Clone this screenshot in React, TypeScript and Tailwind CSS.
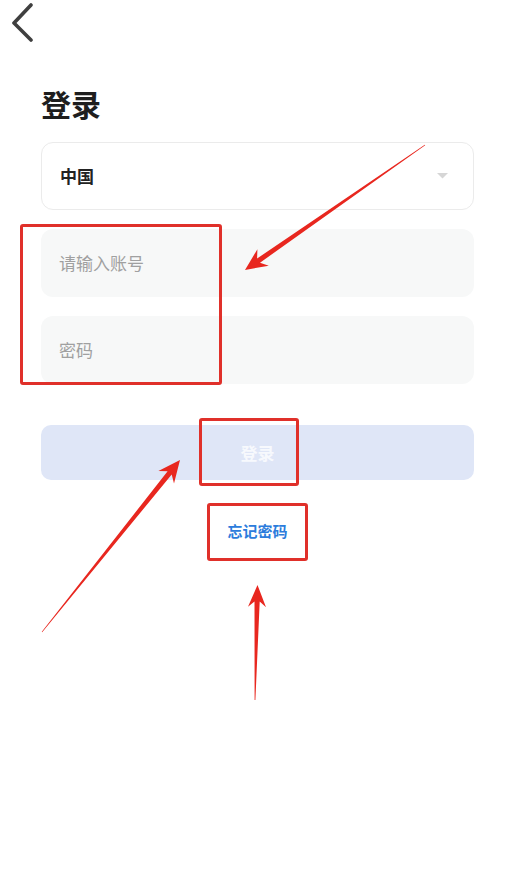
import React from "react";

type Pt = [number, number];

function arrowPoints(tail: Pt, tip: Pt, headLen: number, headHalf: number, shaftW: number, tailW: number): string {
  const dx = tip[0] - tail[0];
  const dy = tip[1] - tail[1];
  const len = Math.hypot(dx, dy);
  const ux = dx / len;
  const uy = dy / len;
  const px = -uy;
  const py = ux;
  const bx = tip[0] - ux * headLen;
  const by = tip[1] - uy * headLen;
  const nx = tip[0] - ux * headLen * 0.75;
  const ny = tip[1] - uy * headLen * 0.75;
  const pts: Pt[] = [
    [tail[0] + px * tailW, tail[1] + py * tailW],
    [nx + px * shaftW, ny + py * shaftW],
    [bx + px * headHalf, by + py * headHalf],
    [tip[0], tip[1]],
    [bx - px * headHalf, by - py * headHalf],
    [nx - px * shaftW, ny - py * shaftW],
    [tail[0] - px * tailW, tail[1] - py * tailW],
  ];
  return pts.map((p) => `${p[0].toFixed(1)},${p[1].toFixed(1)}`).join(" ");
}

export default function App() {
  const font = { fontFamily: '"Noto Sans CJK SC", "Noto Sans", sans-serif' };
  return (
    <div className="relative w-[515px] h-[894px] bg-white overflow-hidden" style={font}>
      <div className="h-[44px] pl-[10px] pt-[2px]">
        <svg width="26" height="40" viewBox="0 0 26 40">
          <polyline points="21,3 4,21 21,38" fill="none" stroke="#3f3f3f" strokeWidth="3.6" strokeLinecap="round" strokeLinejoin="round" />
        </svg>
      </div>
      <div className="px-[41px]">
        <h1 className="mt-[41px] text-[30px] leading-[36px] font-bold text-[#1e1e1e]">登录</h1>
        <div className="mt-[21px] h-[68px] rounded-[12px] border border-[#ebebeb] flex items-center justify-between pl-[18px] pr-[25px]">
          <span className="text-[17px] font-semibold text-[#222]">中国</span>
          <svg width="11" height="6" viewBox="0 0 11 6">
            <polygon points="0,0 11,0 5.5,5.5" fill="#d6d6d6" />
          </svg>
        </div>
        <div className="mt-[19px] h-[68px] rounded-[12px] bg-[#f7f8f8] flex items-center pl-[18px]">
          <span className="text-[17px] text-[#a0a0a0]">请输入账号</span>
        </div>
        <div className="mt-[19px] h-[68px] rounded-[12px] bg-[#f7f8f8] flex items-center pl-[18px]">
          <span className="text-[17px] text-[#a0a0a0]">密码</span>
        </div>
        <div className="mt-[41px] h-[55px] rounded-[10px] bg-[#dfe6f7] flex items-center justify-center">
          <span className="text-[17px] font-bold text-[#f7f9fd]">登录</span>
        </div>
        <div className="mt-[41px] flex justify-center">
          <span className="text-[15px] leading-[20px] font-semibold text-[#2c7cdc]">忘记密码</span>
        </div>
      </div>

      {/* annotation overlays */}
      <div className="absolute left-[20px] top-[224px] w-[202px] h-[161px] border-[3px] border-[#e0302a] rounded-[3px]" />
      <div className="absolute left-[199px] top-[418px] w-[100px] h-[68px] border-[3px] border-[#e0302a] rounded-[3px]" />
      <div className="absolute left-[207px] top-[503px] w-[101px] h-[58px] border-[3px] border-[#e0302a] rounded-[3px]" />
      <svg className="absolute left-0 top-0" width="515" height="894" viewBox="0 0 515 894">
        <polygon points={arrowPoints([425, 145], [245, 270], 22, 10, 2.6, 0.3)} fill="#e8271f" />
        <polygon points={arrowPoints([42, 632], [180, 460], 22, 10, 2.6, 0.3)} fill="#e8271f" />
        <polygon points={arrowPoints([255, 700], [257.5, 585], 22, 9, 2.6, 0.4)} fill="#e8271f" />
      </svg>
    </div>
  );
}
